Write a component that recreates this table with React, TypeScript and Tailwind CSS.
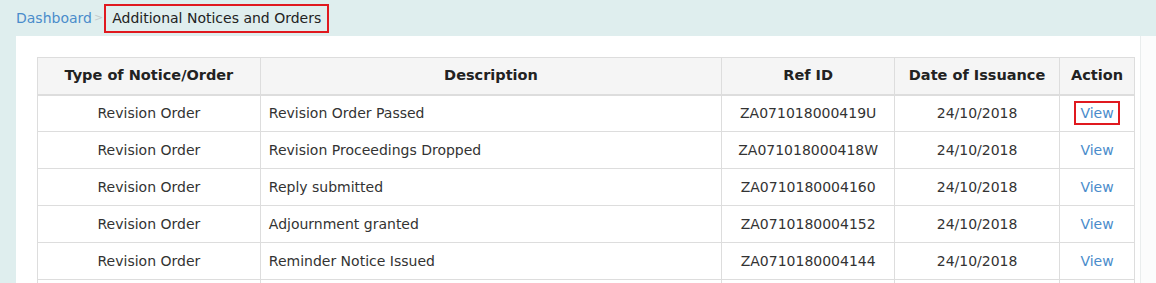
import React from 'react';

const rows = [
  { type: 'Revision Order', desc: 'Revision Order Passed', ref: 'ZA071018000419U', date: '24/10/2018', boxed: true },
  { type: 'Revision Order', desc: 'Revision Proceedings Dropped', ref: 'ZA071018000418W', date: '24/10/2018' },
  { type: 'Revision Order', desc: 'Reply submitted', ref: 'ZA0710180004160', date: '24/10/2018' },
  { type: 'Revision Order', desc: 'Adjournment granted', ref: 'ZA0710180004152', date: '24/10/2018' },
  { type: 'Revision Order', desc: 'Reminder Notice Issued', ref: 'ZA0710180004144', date: '24/10/2018' },
];

export default function App() {
  return (
    <div className="w-[1156px] h-[283px] overflow-hidden bg-[#dfeeee] text-[14px] text-[#333] font-['DejaVu_Sans',Verdana,sans-serif]">
      {/* Breadcrumb */}
      <div className="flex items-center h-[36px] pl-4">
        <a className="text-[#4a8ccb]">Dashboard</a>
        <span className="ml-[2px] mr-[1px] text-[#c5cccc] text-[11px]">&gt;</span>
        <span className="border-2 border-[#e0191f] px-[6px] h-[29px] flex items-center text-[#222]">Additional Notices and Orders</span>
      </div>

      <div className="flex h-[247px]">
        {/* Panel */}
        <div className="ml-4 w-[1125px] shrink-0 bg-white pt-[21px] pl-[21px] border-r border-[#e9eded]">
          <table className="w-[1098px] border-collapse">
            <thead>
              <tr className="bg-[#f5f5f5] h-[37px] text-[#222]">
                <th className="w-[223px] border border-[#ddd] border-b-2 font-bold text-center text-[14.5px]">Type of Notice/Order</th>
                <th className="w-[462px] border border-[#ddd] border-b-2 font-bold text-center text-[14.5px]">Description</th>
                <th className="w-[173px] border border-[#ddd] border-b-2 font-bold text-center text-[14.5px]">Ref ID</th>
                <th className="w-[165px] border border-[#ddd] border-b-2 font-bold text-center text-[14.5px]">Date of Issuance</th>
                <th className="w-[75px] border border-[#ddd] border-b-2 font-bold text-center text-[14.5px]">Action</th>
              </tr>
            </thead>
            <tbody>
              {rows.map((r, i) => (
                <tr key={i} className="h-[37px]">
                  <td className="border border-[#ddd] text-center">{r.type}</td>
                  <td className="border border-[#ddd] pl-[8px]">{r.desc}</td>
                  <td className="border border-[#ddd] text-center">{r.ref}</td>
                  <td className="border border-[#ddd] text-center">{r.date}</td>
                  <td className="border border-[#ddd] text-center">
                    {r.boxed ? (
                      <span className="inline-block border-2 border-[#e0191f] px-[4px] leading-[20px] text-[#4a8ccb]">View</span>
                    ) : (
                      <a className="text-[#4a8ccb]">View</a>
                    )}
                  </td>
                </tr>
              ))}
              <tr className="h-[37px]">
                <td className="border border-[#ddd]"></td>
                <td className="border border-[#ddd]"></td>
                <td className="border border-[#ddd]"></td>
                <td className="border border-[#ddd]"></td>
                <td className="border border-[#ddd]"></td>
              </tr>
            </tbody>
          </table>
        </div>
        <div className="flex-1 bg-[#fbfcfc]"></div>
      </div>
    </div>
  );
}
